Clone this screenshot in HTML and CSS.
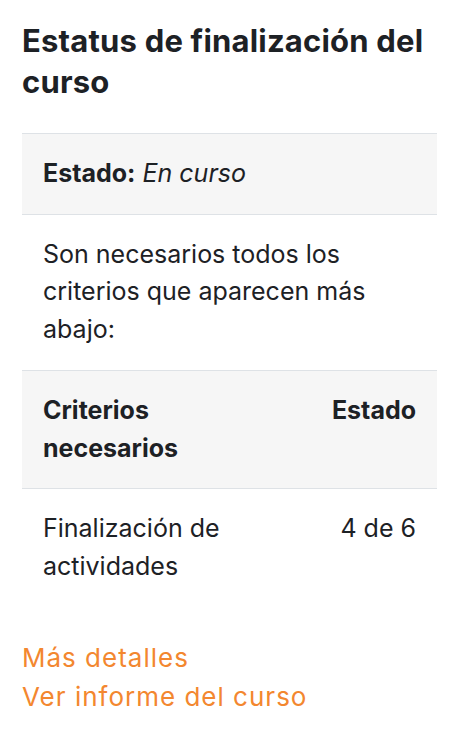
FILE: index.html
```html
<!DOCTYPE html>
<html lang="es">
<head>
    <meta charset="UTF-8">
    <meta name="viewport" content="width=device-width, initial-scale=1.0">
    <title>Estatus de finalización del curso</title>
    <link rel="stylesheet" href="styles.css">
</head>
<body>
    <div class="block">
        <h3 class="block-title">Estatus de finalización del curso</h3>
        <div class="status-table">
            <div class="row shaded">
                <div class="cell full"><strong>Estado:</strong> <em>En curso</em></div>
            </div>
            <div class="row">
                <div class="cell full">Son necesarios todos los criterios que aparecen más abajo:</div>
            </div>
            <div class="row shaded">
                <div class="cell head">Criterios necesarios</div>
                <div class="cell head right">Estado</div>
            </div>
            <div class="row">
                <div class="cell">Finalización de actividades</div>
                <div class="cell right">4 de 6</div>
            </div>
        </div>
        <div class="links">
            <a href="#">Más detalles</a>
            <a href="#">Ver informe del curso</a>
        </div>
    </div>
</body>
</html>
```

FILE: styles.css
```css
body {
    font-family: Inter, "Noto Sans", sans-serif;
    margin: 0;
    padding: 0;
    background-color: #ffffff;
    color: #1d2125;
}
.block {
    padding: 20px 21px 0 22px;
}
.block-title {
    font-size: 31px;
    line-height: 41px;
    font-weight: 700;
    letter-spacing: 0.2px;
    margin: 0 0 31px 0;
}
.status-table {
    font-size: 25px;
    line-height: 37.7px;
}
.row {
    display: grid;
    grid-template-columns: 262px 1fr;
    border-top: 1px solid #dee2e6;
}
.row.shaded {
    background-color: #f6f6f6; /* light grey rows */
}
.cell {
    padding: 21px;
}
.cell.full {
    grid-column: 1 / -1;
}
.cell.head {
    font-weight: 700;
}
.cell.right {
    text-align: right;
}
.links {
    display: flex;
    flex-direction: column;
    margin-top: 31px;
    font-size: 26px;
    line-height: 39px;
    letter-spacing: 1px;
}
.links a {
    color: #f3872f; /* orange links */
    text-decoration: none;
}
```
